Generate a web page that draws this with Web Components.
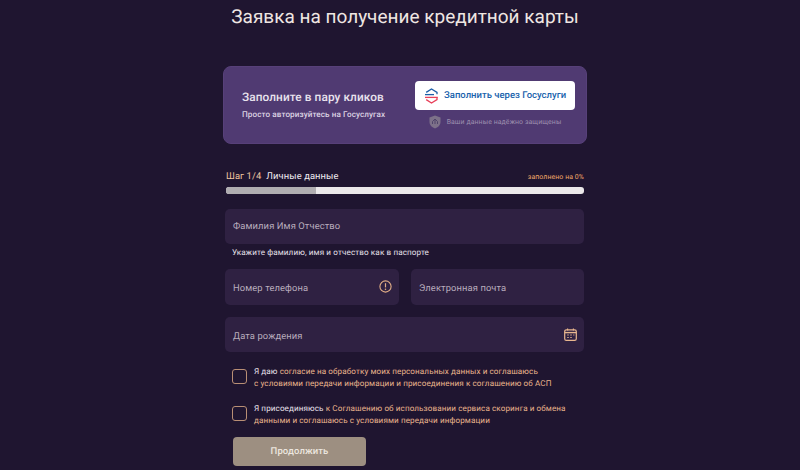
<!DOCTYPE html>
<html lang="ru"><head><meta charset="utf-8"><title>Заявка</title>
<style>
html,body{margin:0;height:470px;overflow:hidden;background:#1f1530;font-family:Roboto,"Liberation Sans",sans-serif;text-rendering:geometricPrecision}
</style></head><body>
<app-page>
  <page-title slot="title">Заявка на получение кредитной карты</page-title>
  <gos-banner slot="banner"></gos-banner>
  <step-progress slot="progress"></step-progress>
  <form-field label="Фамилия Имя Отчество" hint="Укажите фамилию, имя и отчество как в паспорте"></form-field>
  <div class="row" style="display:grid;grid-template-columns:174px 173px;column-gap:12px;margin-top:11px;--label-pad:4px">
    <form-field label="Номер телефона" icon="alert"></form-field>
    <form-field label="Электронная почта"></form-field>
  </div>
  <form-field style="margin-top:12px;--label-pad:6px" label="Дата рождения" icon="calendar"></form-field>
  <consent-box style="margin-top:12.5px">Я даю <a>согласие на обработку моих персональных данных и соглашаюсь<br>с условиями передачи информации и присоединения к соглашению об АСП</a></consent-box>
  <consent-box style="margin-top:13px">Я присоединяюсь <a>к Соглашению об использовании сервиса скоринга и обмена<br>данными и соглашаюсь с условиями передачи информации</a></consent-box>
  <submit-button>Продолжить</submit-button>
</app-page>
<script>
const def=(n,html)=>customElements.define(n,class extends HTMLElement{
  connectedCallback(){if(this.shadowRoot)return;const s=this.attachShadow({mode:'open'});s.innerHTML=typeof html==='function'?html(this):html;}
});
def('app-page',`<style>
:host{display:block;width:364px;margin-left:223px;font-family:Roboto,"Liberation Sans",sans-serif}
.t{display:block;margin-bottom:37px}
.b{display:block;padding:15px 3px 0 2px}
</style><slot name="title" class="t"></slot><slot name="banner"></slot><slot name="progress"></slot><div class="b"><slot></slot></div>`);
def('page-title',`<style>
:host{display:block;text-align:center;font-size:19px;line-height:24px;padding-top:5px;color:#efe6e2;font-weight:400;white-space:nowrap}
</style><slot></slot>`);
def('gos-banner',`<style>
:host{display:flex;box-sizing:border-box;height:78px;background:#503a72;border-radius:8px;border:1px solid #574079;padding:14px 11px 0 18px;justify-content:space-between}
.l{padding-top:8px}
h2{margin:0;font:500 11.8px/16px Roboto,sans-serif;color:#e9e3ee;letter-spacing:.1px;white-space:nowrap}
p{margin:3px 0 0;font:500 8.1px/12px Roboto,sans-serif;color:#ddd3e3;letter-spacing:.1px;white-space:nowrap}
.r{width:160px;display:flex;flex-direction:column;align-items:center}
.btn{box-sizing:border-box;width:160px;height:29px;background:#fff;border-radius:4px;display:flex;align-items:center;padding-left:9px;gap:5px;color:#1a63ad;font:500 9.5px/12px Roboto,sans-serif;white-space:nowrap}
.s{display:flex;align-items:center;gap:6px;margin-top:5px;font:400 6.9px/12px Roboto,sans-serif;color:#9d8fae;letter-spacing:.1px;white-space:nowrap}
</style><div class="l"><h2>Заполните в пару кликов</h2><p>Просто авторизуйтесь на Госуслугах</p></div>
<div class="r"><div class="btn"><svg width="15" height="16" viewBox="0 0 15 16" fill="none"><path d="M2.2 4.4 7.5 1 13 4.4V6.2" stroke="#1d5fa8" stroke-width="1.3"/><path d="M2.2 11.6 7.5 15 13 11.6V9.6" stroke="#e8405a" stroke-width="1.3"/><path d="M1 6.6H10" stroke="#1d5fa8" stroke-width="1.3"/><path d="M1 9.4H13.8" stroke="#e8405a" stroke-width="1.3"/></svg>Заполнить через Госуслуги</div>
<div class="s"><svg width="12" height="14" viewBox="0 0 12 14"><path d="M6 .5 11.5 2.5V7C11.5 10.5 8.5 12.6 6 13.5 3.5 12.6.5 10.5.5 7V2.5Z" fill="#7d7189"/><path d="M3.5 9V6.5L6 4 8.5 6.5V9M6 4V9" fill="none" stroke="#50456a" stroke-width="1"/></svg><span>Ваши данные надёжно защищены</span></div></div>`);
def('step-progress',`<style>
:host{display:block;padding:0 3px;margin-top:25px}
.h{display:flex;justify-content:space-between;align-items:center;height:16px;font:400 9.4px/16px Roboto,sans-serif}
.st{color:#f0c6a0;letter-spacing:.1px}.nm{color:#f0ecf2;margin-left:5px;letter-spacing:.1px}
.p{font-size:6.9px;color:#f0a868;letter-spacing:.1px}
.bar{height:6.5px;margin-top:2px;background:#ebe8ea;border-radius:3px;overflow:hidden}
.bar i{display:block;width:25%;height:100%;background:#b0adb1}
</style><div class="h"><div><span class="st">Шаг 1/4</span><span class="nm">Личные данные</span></div><span class="p">заполнено на 0%</span></div><div class="bar"><i></i></div>`);
const icons={
 alert:`<svg width="13" height="13" viewBox="0 0 13 13" fill="none"><circle cx="6.5" cy="6.5" r="5.6" stroke="#e0ad86" stroke-width="1.1"/><path d="M6.5 3.2V7.4" stroke="#e0ad86" stroke-width="1.2"/><circle cx="6.5" cy="9.3" r=".8" fill="#e0ad86"/></svg>`,
 calendar:`<svg width="13" height="13" viewBox="0 0 13 13" fill="none"><rect x=".7" y="1.8" width="11.6" height="10.5" rx="1.6" stroke="#e9b78f" stroke-width="1.2"/><path d="M.7 4.6H12.3" stroke="#e9b78f" stroke-width="1.4"/><path d="M3.6.4V2.6M9.4.4V2.6" stroke="#e9b78f" stroke-width="1.1"/><path d="M3 7H5M6 7H8M9 7H10.5M3 9.5H5M6 9.5H8" stroke="#e9b78f" stroke-opacity=".7" stroke-width="1"/></svg>`};
def('form-field',el=>`<style>
:host{display:block}
.f{box-sizing:border-box;height:35.5px;background:#2f2142;border-radius:5px;display:flex;align-items:center;justify-content:space-between;padding:0 7px 0 8px;color:#b9adbd;font:400 9.4px/14px Roboto,sans-serif;letter-spacing:.1px;white-space:nowrap}
.f span{padding-top:var(--label-pad,2px)}
svg{display:block}
.h{margin:2px 0 7px 7px;font:400 8.1px/12px Roboto,sans-serif;color:#e6e0ea;letter-spacing:.12px;white-space:nowrap}
</style><div class="f"><span>${el.getAttribute('label')}</span>${icons[el.getAttribute('icon')]||''}</div>${el.getAttribute('hint')?`<div class="h">${el.getAttribute('hint')}</div>`:''}`);
def('consent-box',`<style>
:host{display:flex;align-items:center;gap:7px;padding-left:7px;font:400 8.1px/12px Roboto,sans-serif;color:#e8e0ea;letter-spacing:.1px;white-space:nowrap;min-height:24px}
.c{box-sizing:border-box;width:15px;height:15px;border:1px solid #b98f75;border-radius:3px;flex:none}
::slotted(a){color:#e9b48c}
</style><span class="c"></span><div><slot></slot></div>`);
def('submit-button',`<style>
:host{display:flex;align-items:center;justify-content:center;box-sizing:border-box;width:133px;height:29px;margin:11px 0 0 8px;padding-top:2px;background:#9d8f81;border-radius:4px;color:#ece6df;font:500 9.5px/14px Roboto,sans-serif;letter-spacing:.1px}
</style><slot></slot>`);
</script>
</body></html>
